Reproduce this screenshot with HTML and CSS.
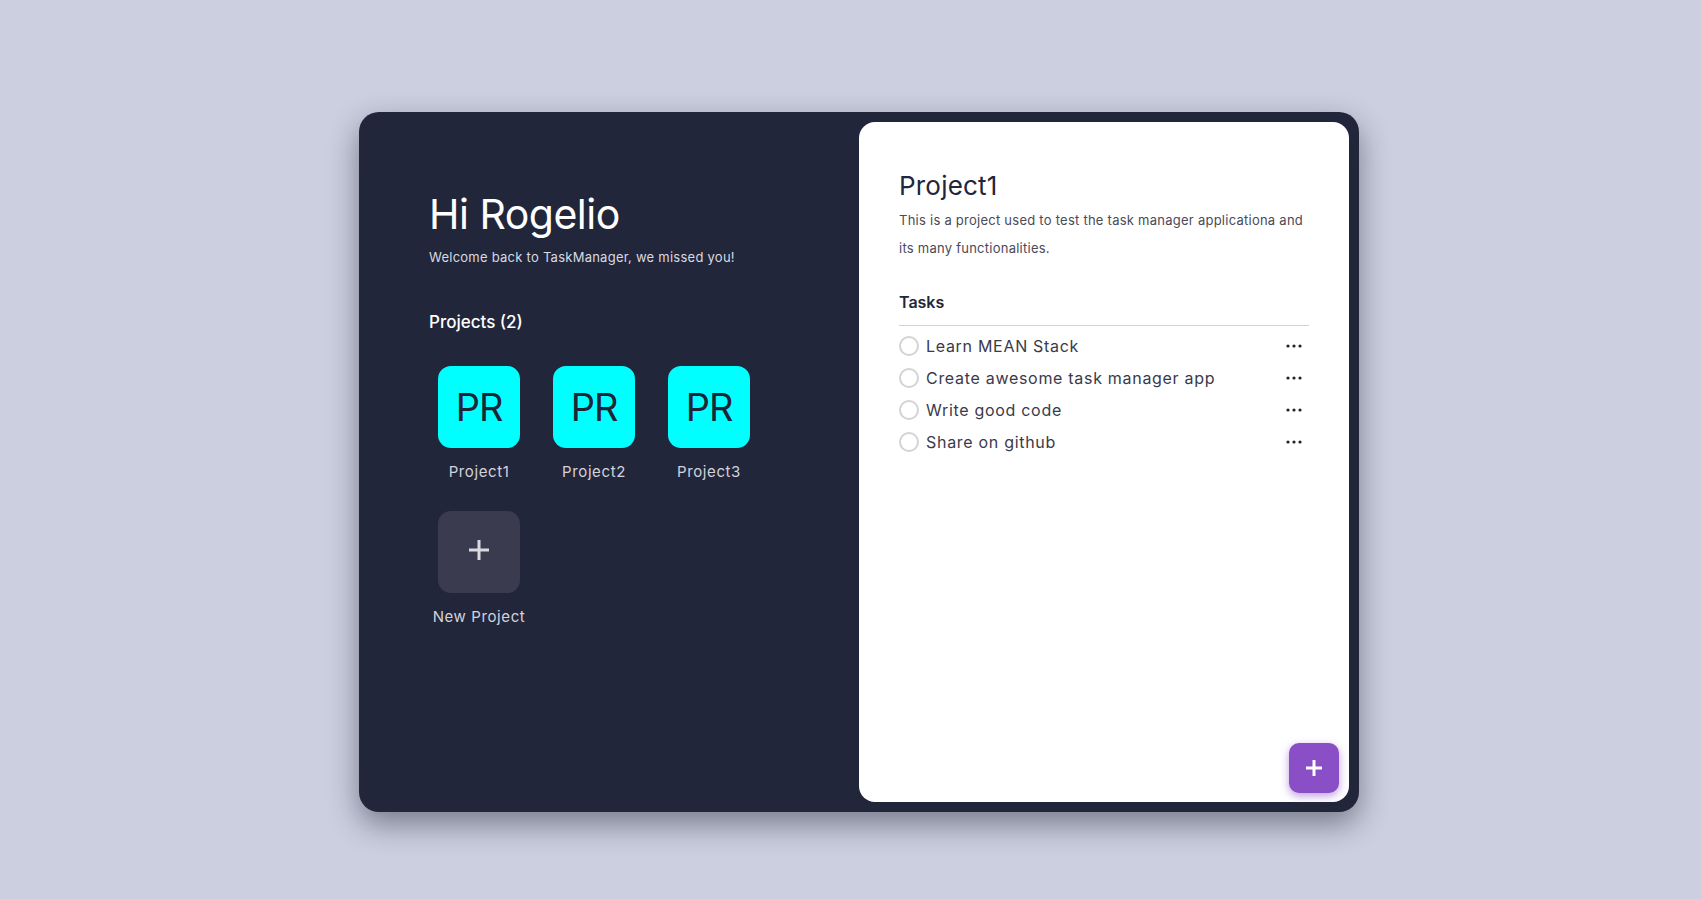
FILE: index.html
```html
<!DOCTYPE html>
<html lang="en">
<head>
<meta charset="utf-8">
<title>TaskManager</title>
<link rel="stylesheet" href="styles.css">
</head>
<body>
<div class="page">
  <main class="card">
    <section class="side">
      <h1 class="greeting">Hi Rogelio</h1>
      <p class="welcome">Welcome back to TaskManager, we missed you!</p>
      <h2 class="projects-title">Projects (2)</h2>
      <div class="project-grid">
        <div class="project">
          <div class="tile">PR</div>
          <span class="project-name">Project1</span>
        </div>
        <div class="project">
          <div class="tile">PR</div>
          <span class="project-name">Project2</span>
        </div>
        <div class="project">
          <div class="tile">PR</div>
          <span class="project-name">Project3</span>
        </div>
        <div class="project">
          <div class="tile tile-new">
            <svg width="22" height="22" viewBox="0 0 22 22"><path d="M11 1v20M1 11h20" stroke="#d9d9df" stroke-width="3" fill="none"/></svg>
          </div>
          <span class="project-name">New Project</span>
        </div>
      </div>
    </section>
    <section class="detail">
      <h2 class="detail-title">Project1</h2>
      <p class="detail-desc">This is a project used to test the task manager applicationa and its many functionalities.</p>
      <h3 class="tasks-head">Tasks</h3>
      <ul class="tasks">
        <li class="task"><span class="check"></span><span class="task-text">Learn MEAN Stack</span><svg class="dots" width="16" height="4" viewBox="0 0 16 4"><circle cx="2" cy="2" r="1.6"/><circle cx="8" cy="2" r="1.6"/><circle cx="14" cy="2" r="1.6"/></svg></li>
        <li class="task"><span class="check"></span><span class="task-text">Create awesome task manager app</span><svg class="dots" width="16" height="4" viewBox="0 0 16 4"><circle cx="2" cy="2" r="1.6"/><circle cx="8" cy="2" r="1.6"/><circle cx="14" cy="2" r="1.6"/></svg></li>
        <li class="task"><span class="check"></span><span class="task-text">Write good code</span><svg class="dots" width="16" height="4" viewBox="0 0 16 4"><circle cx="2" cy="2" r="1.6"/><circle cx="8" cy="2" r="1.6"/><circle cx="14" cy="2" r="1.6"/></svg></li>
        <li class="task"><span class="check"></span><span class="task-text">Share on github</span><svg class="dots" width="16" height="4" viewBox="0 0 16 4"><circle cx="2" cy="2" r="1.6"/><circle cx="8" cy="2" r="1.6"/><circle cx="14" cy="2" r="1.6"/></svg></li>
      </ul>
      <button class="fab" aria-label="Add task">
        <svg width="18" height="18" viewBox="0 0 18 18"><path d="M9 1v16M1 9h16" stroke="#ffffff" stroke-width="3" fill="none"/></svg>
      </button>
    </section>
  </main>
</div>
</body>
</html>
```

FILE: styles.css
```css
* { box-sizing: border-box; }

html, body {
  min-height: 100%;
}

body {
  margin: 0;
  background: #cbcfdf;
  font-family: "Inter", "Open Sans", sans-serif;
}

.page {
  min-height: 899px;
  padding: 112px 0 0 359px;
}

.card {
  width: 1000px;
  height: 700px;
  background: #22263a;
  border-radius: 20px;
  display: grid;
  grid-template-columns: 490px 1fr;
  box-shadow: 0 12px 30px rgba(20, 22, 40, 0.45);
}

.side {
  padding: 77px 40px 0 70px;
}

.greeting {
  margin: 0;
  font-size: 41px;
  line-height: 50px;
  font-weight: 400;
  color: #ffffff;
  letter-spacing: -0.5px;
}

.welcome {
  margin: 8px 0 0;
  font-size: 13px;
  line-height: 20px;
  color: #d9dae2;
  letter-spacing: 0.25px;
}

.projects-title {
  margin: 43px 0 0;
  font-size: 17px;
  line-height: 24px;
  font-weight: 500;
  color: #ffffff;
}

.project-grid {
  margin-top: 32px;
  display: grid;
  grid-template-columns: repeat(3, 100px);
  column-gap: 15px;
  row-gap: 29px;
}

.project {
  display: flex;
  flex-direction: column;
  align-items: center;
  gap: 14px;
}

.tile {
  width: 82px;
  height: 82px;
  border-radius: 13px;
  background: #00ffff;
  color: #1f2536;
  font-size: 38px;
  font-weight: 400;
  display: flex;
  align-items: center;
  justify-content: center;
  letter-spacing: -1px;
}

.tile-new {
  background: #3a3b4f;
  padding-bottom: 4px;
}

.project-name {
  font-size: 15px;
  line-height: 20px;
  color: #d2d3dc;
  white-space: nowrap;
  letter-spacing: 0.6px;
}

.detail {
  position: relative;
  margin: 10px;
  background: #ffffff;
  border-radius: 16px;
  padding: 47px 40px 0 40px;
}

.detail-title {
  margin: 0;
  font-size: 26px;
  line-height: 34px;
  font-weight: 400;
  color: #22263a;
  letter-spacing: 0.2px;
}

.detail-desc {
  margin: 3px 0 0;
  font-size: 13px;
  line-height: 28px;
  color: #4a4a58;
  letter-spacing: 0.25px;
}

.tasks-head {
  margin: 28px 0 0;
  font-size: 16px;
  line-height: 24px;
  font-weight: 600;
  color: #22263a;
  padding-bottom: 11px;
  border-bottom: 1px solid #d2d2d6;
}

.tasks {
  list-style: none;
  margin: 0;
  padding: 4px 0 0;
}

.task {
  height: 32px;
  display: flex;
  align-items: center;
  padding-right: 7px;
}

.check {
  width: 20px;
  height: 20px;
  border: 2px solid #d3d3d6;
  border-radius: 50%;
  flex: none;
}

.task-text {
  margin-left: 7px;
  flex: 1;
  font-size: 16px;
  color: #3a3a4a;
  letter-spacing: 0.7px;
}

.dots {
  fill: #1f2230;
  flex: none;
}

.fab {
  position: absolute;
  right: 10px;
  bottom: 9px;
  width: 50px;
  height: 50px;
  border: none;
  border-radius: 10px;
  background: #8a4fc7;
  box-shadow: 0 3px 8px rgba(138, 79, 199, 0.55);
  display: flex;
  align-items: center;
  justify-content: center;
  padding: 0;
}
```
